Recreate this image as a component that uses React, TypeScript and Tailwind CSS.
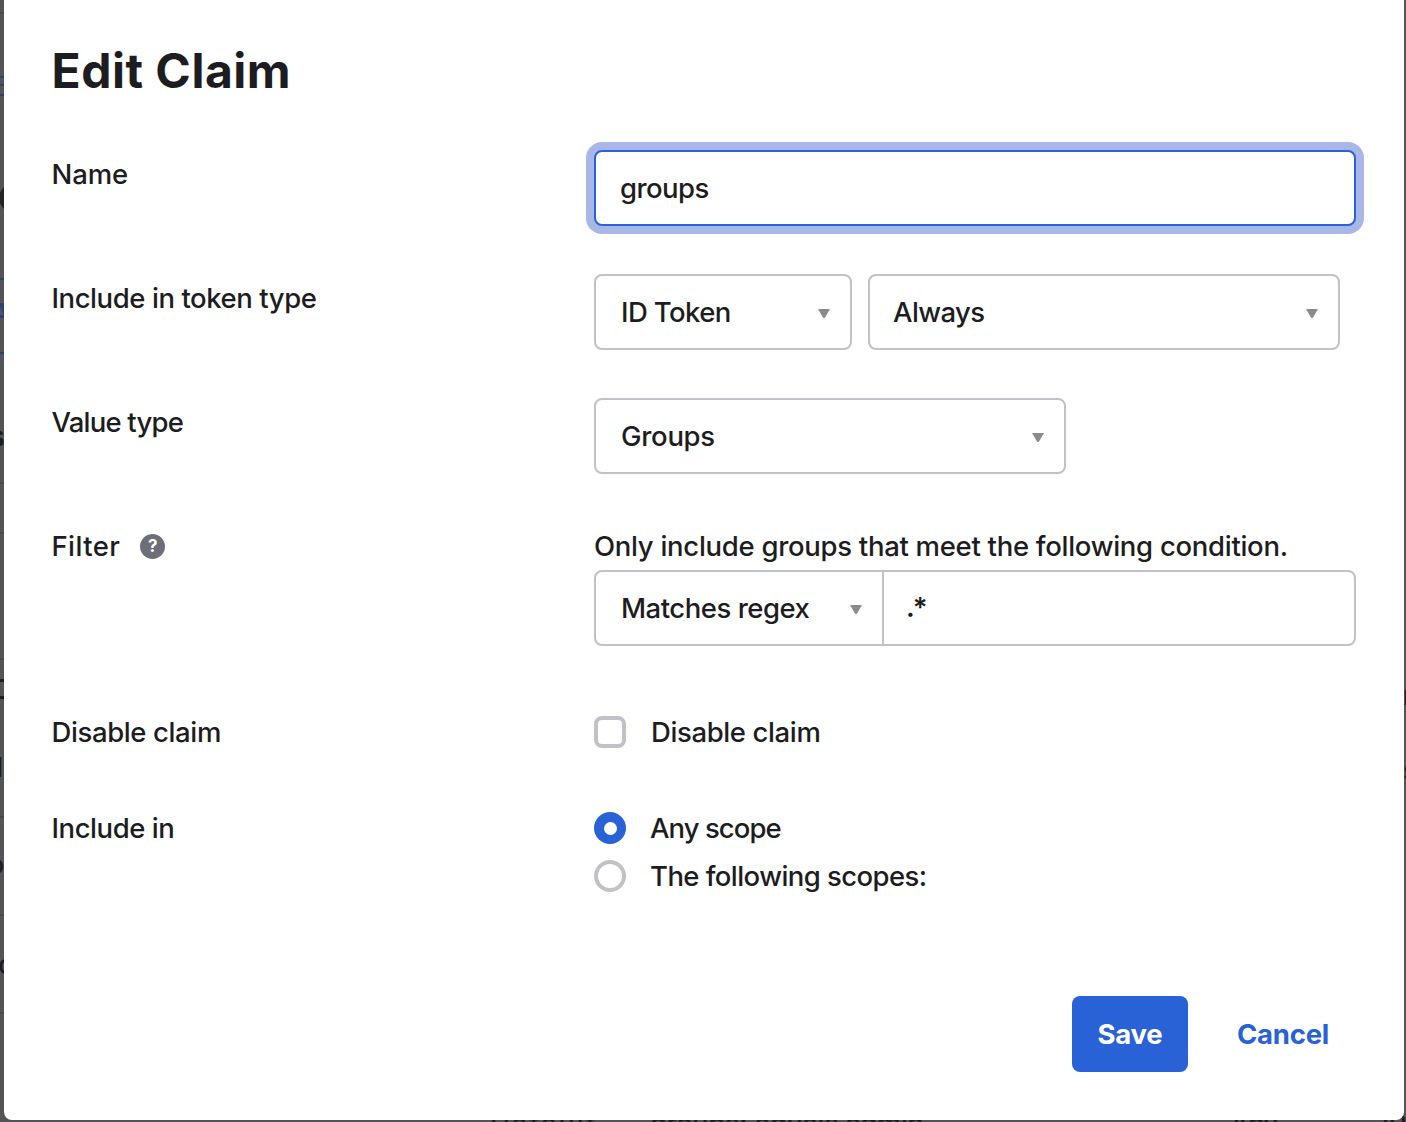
import React from "react";

const rules = "absolute left-0 w-1 h-[2px]";

function Arrow({ className }: { className: string }) {
  return (
    <svg className={className} width="12" height="9" viewBox="0 0 12 9">
      <path d="M0 0H12L7 8.4Q6 9.4 5 8.4Z" fill="#8a8a8a" />
    </svg>
  );
}

function Select({ label, tracking, className }: { label: string; tracking: string; className: string }) {
  return (
    <button className={`flex h-[76px] items-center justify-between border-2 border-[#c1c1c8] bg-white text-left ${className}`}>
      <span className={`whitespace-nowrap ${tracking}`}>{label}</span>
      <Arrow className="mr-5 mt-[3px] shrink-0" />
    </button>
  );
}

function Row({ label, tracking, className, help, children }: { label: string; tracking: string; className: string; help?: boolean; children: React.ReactNode }) {
  return (
    <div className={`flex items-start ${className}`}>
      <div className="flex w-[542.5px] shrink-0 items-center">
        <span className={`whitespace-nowrap ${tracking}`}>{label}</span>
        {help && (
          <span className="ml-5 flex size-[25px] items-center justify-center rounded-full bg-[#6e6e78] text-[17px] leading-none font-bold text-white">?</span>
        )}
      </div>
      <div className="flex-1">{children}</div>
    </div>
  );
}

function Backdrop() {
  return (
    <div className="absolute inset-0 overflow-hidden text-[27px] leading-8 text-[#1d1d21]" aria-hidden="true">
      <i className={`${rules} top-3 bg-[#4a4a4d]`} />
      <i className={`${rules} top-[76px] bg-[#2b3f78]`} />
      <i className={`${rules} top-[84px] bg-[#2b3f78]`} />
      <i className={`${rules} top-[94px] bg-[#2b3f78]`} />
      <i className="absolute -left-[1px] top-[184px] size-7 rounded-full bg-[#242426]" />
      <i className={`${rules} top-[278px] bg-[#2b3f78]`} />
      <span className="absolute -left-[9px] top-[298px] font-semibold text-[#2b3f78]">A</span>
      <i className={`${rules} top-[352px] bg-[#2b3f78]`} />
      <span className="absolute -left-[12px] top-[420px] text-[30px] font-bold">s</span>
      <i className={`${rules} top-[482px] bg-[#49494c]`} />
      <i className={`${rules} top-[532px] bg-[#49494c]`} />
      <i className={`${rules} top-[658px] bg-[#49494c]`} />
      <span className="absolute -left-[8px] top-[674px]">C</span>
      <span className="absolute -left-1 top-[752px]">I</span>
      <i className={`${rules} top-[816px] bg-[#49494c]`} />
      <span className="absolute -left-[12px] top-[849px]">o</span>
      <i className={`${rules} top-[914px] bg-[#49494c]`} />
      <span className="absolute -left-[2px] top-[949px]">c</span>
      <i className={`${rules} top-[1012px] bg-[#49494c]`} />
      <span className="absolute left-[490px] top-[1108px] whitespace-nowrap tracking-[2px]">Default</span>
      <span className="absolute left-[650px] top-[1108px] whitespace-nowrap tracking-[-0.2px]">groups: equals admin</span>
      <span className="absolute left-[1230px] top-[1108px] tracking-[-1px]">Any</span>
      <span className="absolute left-[1378px] top-[1108px]">10</span>
      <span className="absolute left-[1403px] top-[680px]">r</span>
      <span className="absolute left-[1403px] top-[755px]">s</span>
    </div>
  );
}

export default function App() {
  return (
    <div className="relative h-[1122px] w-[1406px] overflow-hidden bg-[#545355] font-['Inter',sans-serif] text-[27.5px] leading-[48px] font-[450] text-[#1d1d21]">
      <Backdrop />
      <main className="relative ml-1 h-[1120px] w-[1400px] rounded-b-[8px] bg-white pl-[47.5px]">
        <h1 className="pt-10 text-[48px] leading-[62px] font-bold tracking-[0.5px] whitespace-nowrap">Edit Claim</h1>

        <Row label="Name" tracking="tracking-[-0.1px]" className="mt-12">
          <div className="flex h-[76px] w-[762px] items-center rounded-[8px] border-2 border-[#2962d6] bg-white pl-6 shadow-[0_0_0_8px_#a9b6e8]">
            <span className="tracking-[-0.55px]">groups</span>
          </div>
        </Row>

        <Row label="Include in token type" tracking="tracking-[-0.43px]" className="mt-12">
          <div className="flex gap-4">
            <Select label="ID Token" tracking="tracking-[-0.6px]" className="w-[258px] rounded-[8px] pl-[25px]" />
            <Select label="Always" tracking="tracking-[-0.6px]" className="w-[472px] rounded-[8px] pl-[23px]" />
          </div>
        </Row>

        <Row label="Value type" tracking="tracking-[-0.8px]" className="mt-12">
          <Select label="Groups" tracking="tracking-[-0.3px]" className="w-[472px] rounded-[8px] pl-[25px]" />
        </Row>

        <Row label="Filter" tracking="tracking-[0.4px]" className="mt-12" help>
          <p className="tracking-[-0.29px] whitespace-nowrap">Only include groups that meet the following condition.</p>
          <div className="flex">
            <Select label="Matches regex" tracking="tracking-[-0.48px]" className="w-[290px] rounded-l-[8px] pl-[25px]" />
            <div className="-ml-[2px] flex h-[76px] w-[474px] items-center rounded-r-[8px] border-2 border-[#c1c1c8] bg-white pb-[2px] pl-[22px] font-semibold tracking-[-2px]">.*</div>
          </div>
        </Row>

        <Row label="Disable claim" tracking="tracking-[-0.38px]" className="mt-[62px]">
          <label className="flex items-center gap-[25px]">
            <span className="size-8 rounded-[8px] border-4 border-[#c1c1c8]" />
            <span className="tracking-[-0.38px]">Disable claim</span>
          </label>
        </Row>

        <Row label="Include in" tracking="tracking-[-0.45px]" className="mt-12">
          <label className="flex items-center gap-6">
            <span className="flex size-8 items-center justify-center rounded-full bg-[#2962d6]">
              <span className="size-[13px] rounded-full bg-white" />
            </span>
            <span className="tracking-[-0.95px]">Any scope</span>
          </label>
          <label className="flex items-center gap-6">
            <span className="size-8 rounded-full border-4 border-[#c1c1c8]" />
            <span className="tracking-[-0.57px]">The following scopes:</span>
          </label>
        </Row>

        <div className="mt-24 flex justify-end pr-[42px] font-bold tracking-[-0.2px]">
          <button className="h-[76px] w-[116px] rounded-[8px] bg-[#2962d6] text-white">Save</button>
          <button className="ml-4 h-[76px] w-[158px] text-[#2962d6]">Cancel</button>
        </div>
      </main>
    </div>
  );
}
